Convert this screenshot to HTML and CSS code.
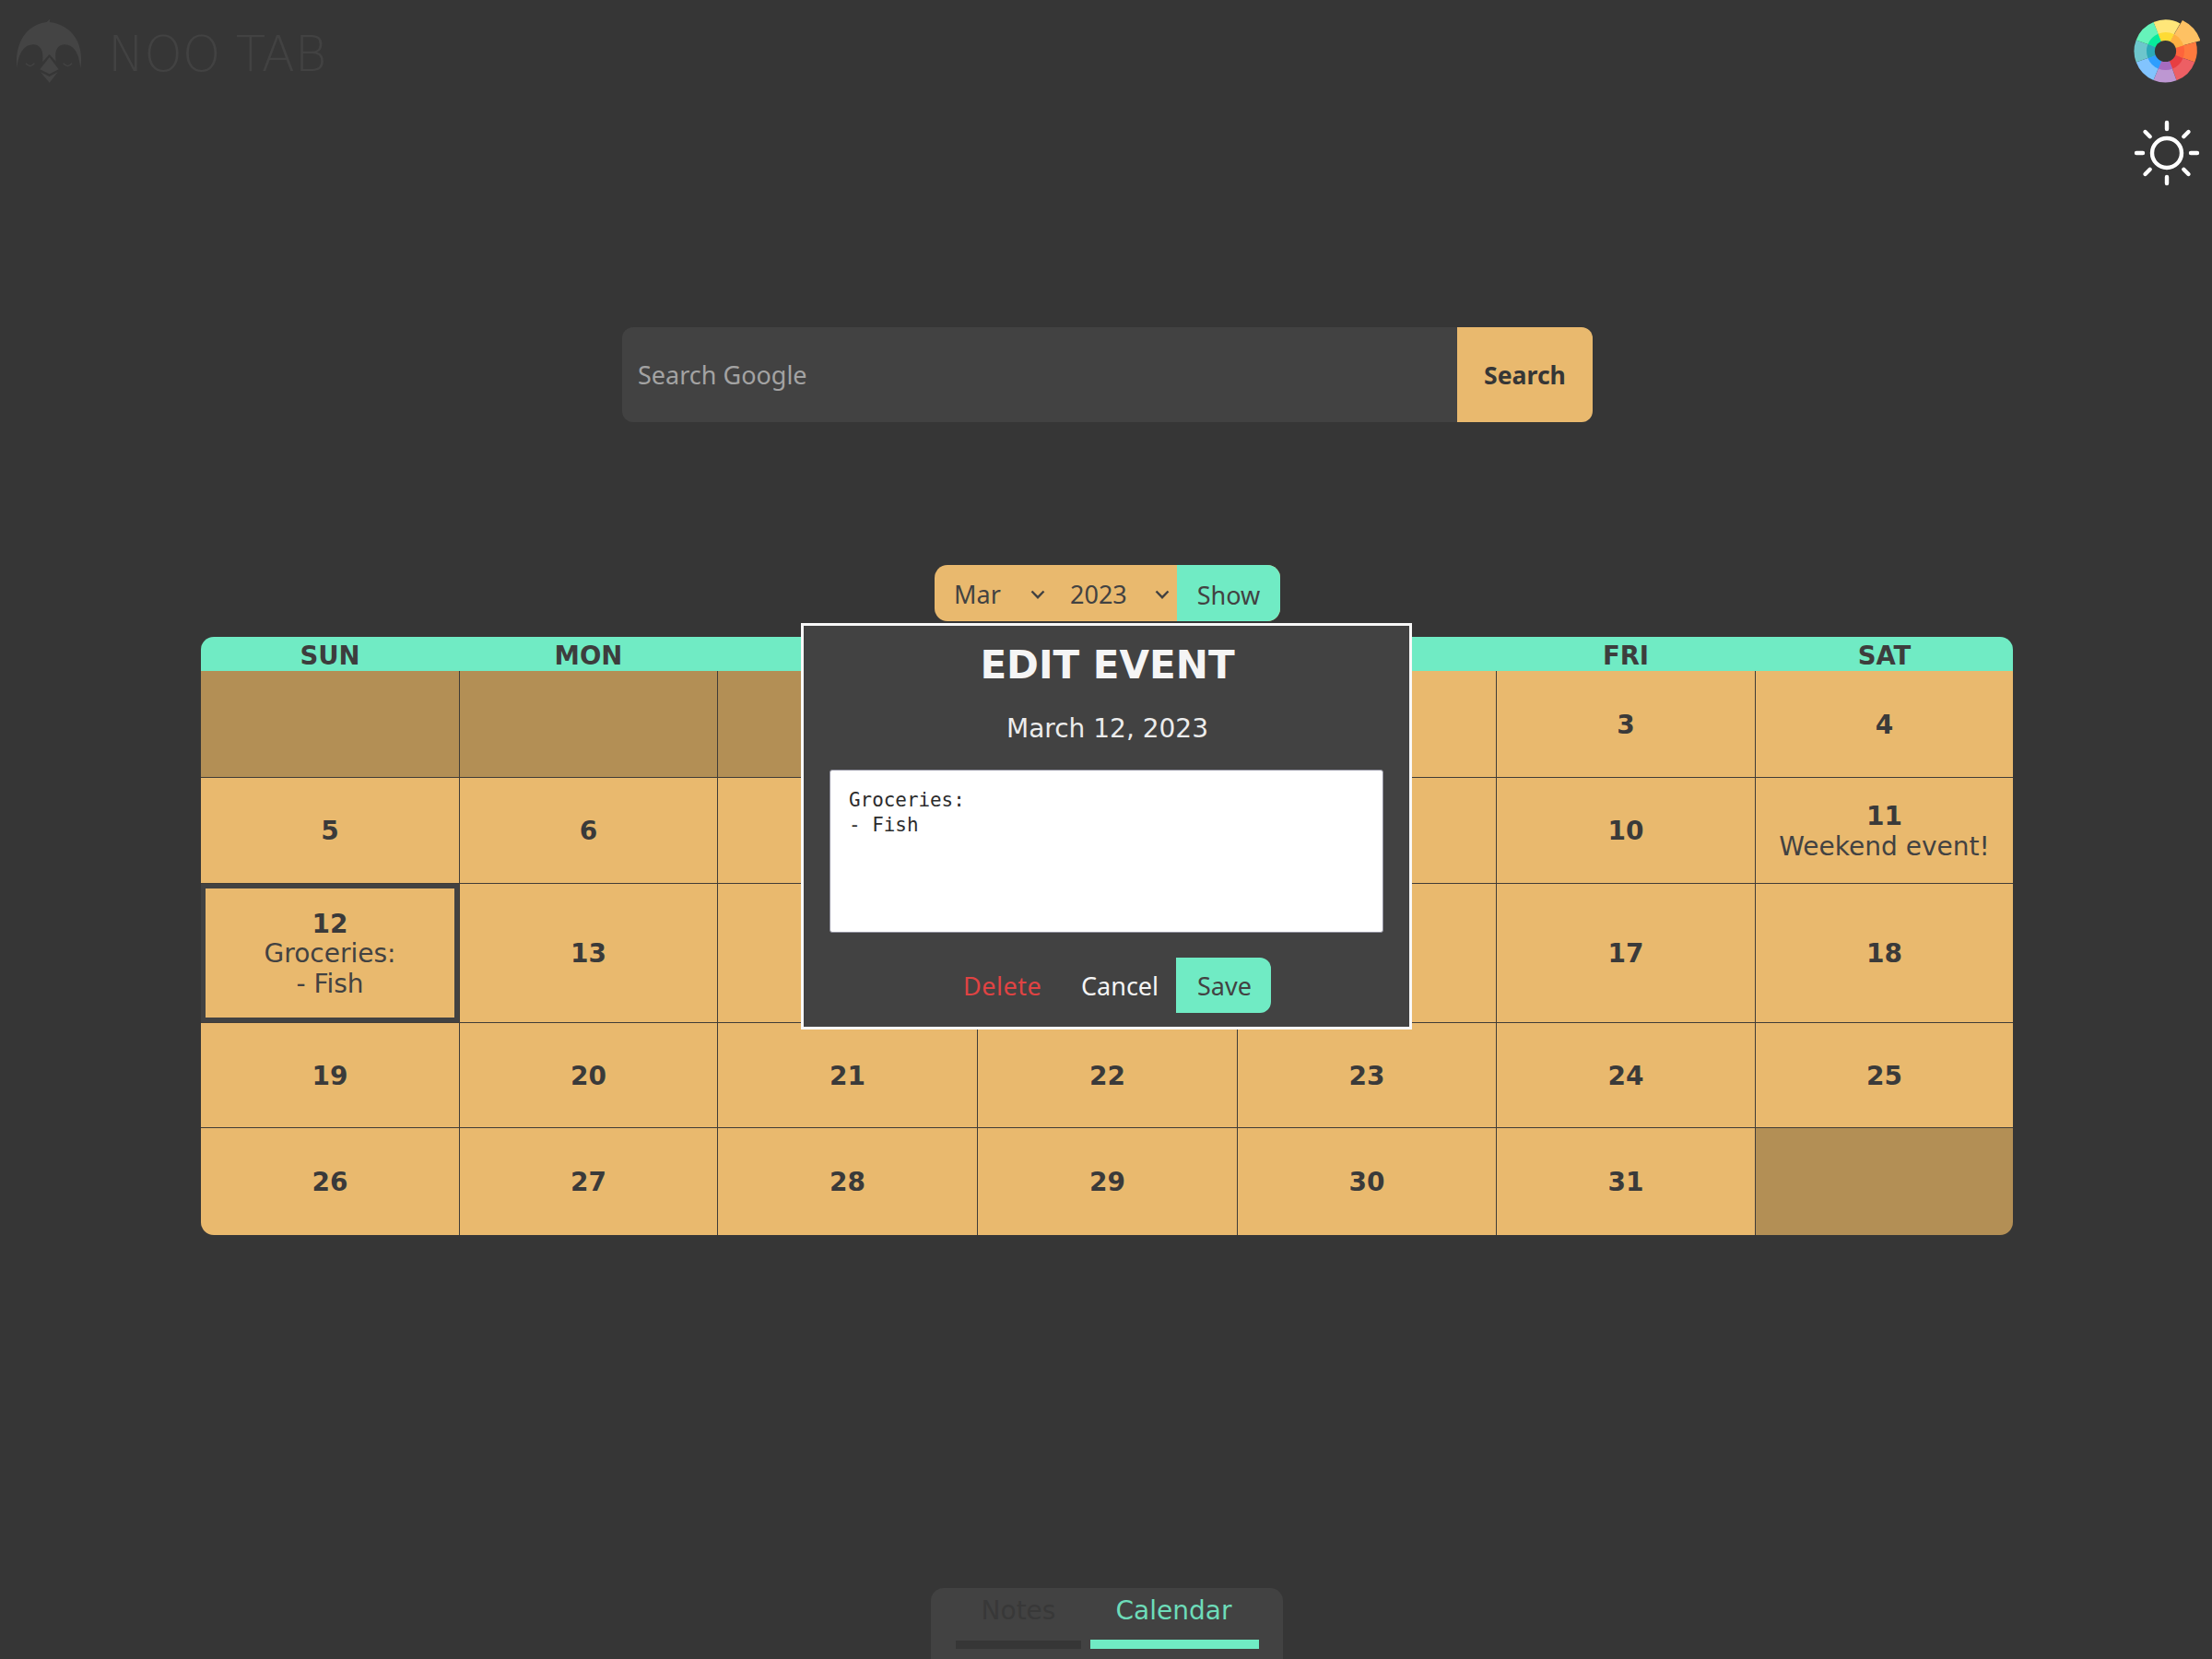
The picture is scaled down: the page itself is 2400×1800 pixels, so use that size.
FILE: index.html
```html
<!DOCTYPE html>
<html lang="en">
<head>
<meta charset="utf-8">
<title>Noo Tab</title>
<link rel="stylesheet" href="styles.css">
</head>
<body>
<header class="top">
  <div class="brand">
    <svg class="logo" viewBox="50 60 216 210">
      <path d="M54 222C46 150 78 82 150 72L162 62L160 72C232 80 274 140 261 222C256 168 236 146 210 145C184 146 176 166 181 200L160 177L137 202C142 166 132 146 107 145C80 146 60 168 54 222Z"/>
      <path d="M160 186L190 226L160 241L129 226Z"/>
      <path d="M131 235L160 249L187 235L160 269Z"/>
      <path class="lid" d="M83 206Q97 224 111 206M205 206Q219 224 233 206"/>
    </svg>
    <span class="name">NOO TAB</span>
  </div>
  <div class="tools">
    <svg class="tool" viewBox="-36 -36 72 72">
      <g transform="translate(-1.5 -.5)">
        <g>
          <path fill="#ffe679" d="M-13-31.4A34 34 0 0 1 16-30L5-11L-5-11Z"/>
          <path fill="#fec163" d="M18.5-33.5A39 39 0 0 1 38-11.5L11-4L5-11Z"/>
          <path fill="#fe7a3e" d="M33-10A34 34 0 0 1 31.8 12L11 4.5L11-4Z"/>
          <path fill="#ed5f64" d="M31.8 12A34 34 0 0 1 12 31.8L4.5 11L11 4.5Z"/>
          <path fill="#bd97d2" d="M12 31.8A34 34 0 0 1-13 31.4L-4.5 11L4.5 11Z"/>
          <path fill="#82c4fe" d="M-13 31.4A34 34 0 0 1-31.8 12L-11 4.5L-4.5 11Z"/>
          <path fill="#6dc6cc" d="M-31.8 12A34 34 0 0 1-31.8-12L-11-4.5L-11 4.5Z"/>
          <path fill="#66f3ba" d="M-31.8-12A34 34 0 0 1-13-31.4L-4.5-11L-11-4.5Z"/>
          <path fill="#fedb34" d="M-8-18.8A20.5 20.5 0 0 1 9.5-18.2L5-10L-4.5-10Z"/>
          <path fill="#feb042" d="M9.5-18.2A20.5 20.5 0 0 1 19.6-6L10-3L5-10Z"/>
          <path fill="#fe643b" d="M19.6-6A20.5 20.5 0 0 1 19 7.7L10 4L10-3Z"/>
          <path fill="#e73e42" d="M19 7.7A20.5 20.5 0 0 1 7.7 19L4 10L10 4Z"/>
          <path fill="#a66bc0" d="M7.7 19A20.5 20.5 0 0 1-7.7 19L-4 10L4 10Z"/>
          <path fill="#2e9efe" d="M-7.7 19A20.5 20.5 0 0 1-19 7.7L-10 4L-4 10Z"/>
          <path fill="#2ba9b8" d="M-19 7.7A20.5 20.5 0 0 1-19-7.7L-10-4L-10 4Z"/>
          <path fill="#07eb9b" d="M-19-7.7A20.5 20.5 0 0 1-8-18.8L-4.5-10L-10-4Z"/>
        </g>
        <circle r="11.6" fill="#363636"/>
      </g>
    </svg>
    <svg class="tool sun" viewBox="-36 -36 72 72">
      <circle r="16"/>
      <path d="M0-33V-26M0 33V26M-33 0H-26M33 0H26M-23.5-23L-18.3-17.8M23.5-23L18.3-17.8M-23.5 23L-18.3 17.8M23.5 23L18.3 17.8"/>
    </svg>
  </div>
</header>

<form class="search">
  <div class="field">Search Google</div>
  <div class="go">Search</div>
</form>

<main class="planner">
  <div class="picker">
    <div class="select month">Mar
      <svg class="chev" viewBox="0 0 16 10"><path d="M1.5 1.5L8 8.2L14.5 1.5"/></svg>
    </div>
    <div class="select year">2023
      <svg class="chev" viewBox="0 0 16 10"><path d="M1.5 1.5L8 8.2L14.5 1.5"/></svg>
    </div>
    <div class="show">Show</div>
  </div>

  <section class="calendar">
    <div class="days">
      <b>SUN</b><b>MON</b><b></b><b></b><b></b><b>FRI</b><b>SAT</b>
    </div>
    <div class="grid">
      <div class="cell off"></div><div class="cell off"></div><div class="cell off"></div><div class="cell"></div><div class="cell"></div><div class="cell"><b>3</b></div><div class="cell"><b>4</b></div>
      <div class="cell"><b>5</b></div><div class="cell"><b>6</b></div><div class="cell"></div><div class="cell"></div><div class="cell"></div><div class="cell"><b>10</b></div><div class="cell"><b>11</b><span>Weekend event!</span></div>
      <div class="cell picked"><b>12</b><span>Groceries:<br>- Fish</span></div><div class="cell"><b>13</b></div><div class="cell"></div><div class="cell"></div><div class="cell"></div><div class="cell"><b>17</b></div><div class="cell"><b>18</b></div>
      <div class="cell"><b>19</b></div><div class="cell"><b>20</b></div><div class="cell"><b>21</b></div><div class="cell"><b>22</b></div><div class="cell"><b>23</b></div><div class="cell"><b>24</b></div><div class="cell"><b>25</b></div>
      <div class="cell"><b>26</b></div><div class="cell"><b>27</b></div><div class="cell"><b>28</b></div><div class="cell"><b>29</b></div><div class="cell"><b>30</b></div><div class="cell"><b>31</b></div><div class="cell off"></div>
    </div>
  </section>

  <div class="modal">
    <h2>EDIT EVENT</h2>
    <p class="date">March 12, 2023</p>
    <div class="note">Groceries:
- Fish</div>
    <div class="actions">
      <span class="delete">Delete</span>
      <span class="cancel">Cancel</span>
      <span class="save">Save</span>
    </div>
  </div>
</main>

<nav class="tabs">
  <div class="tab notes">Notes</div>
  <div class="tab active">Calendar</div>
</nav>
</body>
</html>
```
FILE: styles.css
```css
* { box-sizing: border-box; }

body {
  margin: 0;
  height: 1800px;
  display: flex;
  flex-direction: column;
  align-items: center;
  overflow: hidden;
  background: #363636;
  color: #424242;
  font: 28px/32.5px "DejaVu Sans", sans-serif;
}

.top {
  width: 100%;
  height: 355px;
  flex: none;
  display: flex;
  justify-content: space-between;
  align-items: flex-start;
}

.brand { display: flex; padding: 20px 0 0 17px; }
.logo { width: 72px; height: 70px; fill: #444; }
.logo .lid { fill: none; stroke: #444; stroke-width: 4; }
.name {
  margin-left: 28px;
  font: 200 53px/62px "DejaVu Sans", "DejaVu Sans Light", sans-serif;
  letter-spacing: -.3px;
  padding-top: 8px;
}

.tools { display: flex; flex-direction: column; gap: 38px; padding: 20px 13px 0 0; }
.tool { display: block; width: 72px; height: 72px; }
.sun { fill: none; stroke: #fff; stroke-width: 4.4; stroke-linecap: round; }

.search {
  flex: none;
  width: 1053px;
  height: 103px;
  margin-left: 3px;
  display: flex;
  border-radius: 12px;
  overflow: hidden;
  font: 27px/36px "Noto Sans", sans-serif;
}
.field {
  flex: 1;
  padding: 34px 17px;
  background: #424242;
  color: #a3a3a3;
}
.go {
  width: 147px;
  padding-top: 34px;
  background: #e9b96e;
  color: #363636;
  font-weight: 700;
  font-size: 26.6px;
  text-align: center;
}

.planner {
  position: relative;
  flex: none;
  width: 1966px;
  margin: 155px 0 0 2px;
  height: 727px;
}

.picker {
  width: 375px;
  height: 61px;
  margin: 0 0 17px 796px;
  display: flex;
  align-items: stretch;
  border-radius: 14px;
  overflow: hidden;
  background: #e9b96e;
  font: 27px/64px "Noto Sans", sans-serif;
}
.select { display: flex; align-items: center; justify-content: space-between; padding-top: 3px; }
.month { width: 126px; padding-left: 21px; padding-right: 6px; }
.year { width: 137px; padding-left: 21px; padding-right: 8px; }
.chev { width: 16px; height: 10px; fill: none; stroke: #424242; stroke-width: 2.4; }
.show { flex: 1; background: #70ebc4; text-align: center; line-height: 65px; }

.calendar { border-radius: 14px; overflow: hidden; }
.days,
.grid { display: grid; grid-template-columns: 280px 279px 281px 281px 280px 280px 279px; column-gap: 1px; }
.grid { width: 1966px; }
.days { height: 37px; background: #70ebc4; text-align: center; line-height: 40px; font-size: 27.5px; color: #3d3d3d; }
.grid {
  grid-template-rows: 115px 114px 150px 113px 116px;
  row-gap: 1px;
  background: #403c37;
}
.cell {
  background: #e9b96e;
  display: flex;
  flex-direction: column;
  justify-content: center;
  align-items: center;
  text-align: center;
  padding-top: 3px;
}
.cell b { color: #3a3a3a; }
.off { background: #b38f55; }
.picked { border: 5px solid #424242; }

.modal {
  position: absolute;
  left: 651px;
  top: 63px;
  width: 663px;
  height: 441px;
  border: 3px solid #f8f8f8;
  background: #424242;
  color: #f5f5f5;
  padding: 18px 28px 0;
}
.modal h2 { margin: 0; padding-left: 2px; font-size: 42px; line-height: 50px; text-align: center; }
.date { margin: 27px 0 0; padding-left: 2px; text-align: center; line-height: 34px; color: #ececec; }
.note {
  height: 177px;
  margin-top: 27px;
  padding: 19px 20px;
  border: 1px solid #8f8f9d;
  border-radius: 3px;
  background: #fff;
  color: #2c2c2c;
  white-space: pre;
  font: 20.9px/26.5px "DejaVu Sans Mono", monospace;
}
.actions {
  display: flex;
  justify-content: flex-end;
  margin: 27px 122px 0 0;
  font: 27px/61px "Noto Sans", sans-serif;
}
.delete { width: 86px; margin-right: 42px; color: #e04343; letter-spacing: .5px; }
.cancel { width: 85px; margin-right: 18px; }
.save {
  width: 103px;
  height: 60px;
  border-radius: 0 12px 12px 0;
  background: #70ebc4;
  color: #424242;
  padding-left: 2px;
  text-align: center;
}

.tabs {
  flex: none;
  width: 382px;
  height: 77px;
  margin: auto 0 0 2px;
  display: flex;
  gap: 10px;
  padding: 7px 26px 11px 27px;
  border-radius: 14px 14px 0 0;
  background: #424242;
}
.tab { height: 59px; padding-top: 2px; text-align: center; }
.notes { width: 136px; border-bottom: 9px solid #363636; color: #383838; }
.active { flex: 1; padding-right: 2px; border-bottom: 10px solid #70ebc4; color: #6ddcb9; }
```
